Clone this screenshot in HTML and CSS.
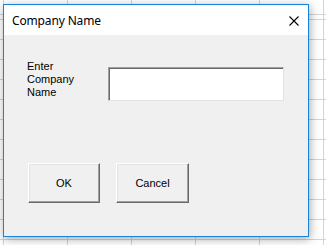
FILE: index.html
```html
<!DOCTYPE html>
<html>
<head>
<meta charset="utf-8">
<link rel="stylesheet" href="styles.css">
</head>
<body>
<div class="window">
  <div class="titlebar">
    <span class="title">Company Name</span>
    <svg class="close" width="10" height="10" viewBox="0 0 10 10"><path d="M0.5 0.5 L9.5 9.5 M9.5 0.5 L0.5 9.5" stroke="#000" stroke-width="1.1" fill="none"/></svg>
  </div>
  <div class="content">
    <div class="row">
      <label class="label">Enter<br>Company<br>Name</label>
      <div class="textbox"></div>
    </div>
    <div class="buttons">
      <button class="btn">OK</button>
      <button class="btn">Cancel</button>
    </div>
  </div>
</div>
</body>
</html>
```
FILE: styles.css
```css
html, body {
  margin: 0;
  padding: 0;
}
body {
  width: 326px;
  height: 245px;
  overflow: hidden;
  background-color: #fff;
  background-image:
    repeating-linear-gradient(to right, #d4d4d4 0, #d4d4d4 1px, transparent 1px, transparent 64px),
    repeating-linear-gradient(to bottom, #d4d4d4 0, #d4d4d4 1px, transparent 1px, transparent 20px);
  background-position: 3px 19px, 0 19px;
  font-family: "Liberation Sans", Arial, sans-serif;
  padding: 4px 0 0 3px;
  box-sizing: border-box;
}
.window {
  width: 306px;
  height: 233px;
  box-sizing: border-box;
  border: 1px solid #1883d7;
  background: #f0f0f0;
  box-shadow: 1px 2px 9px rgba(0, 0, 0, 0.35);
  display: flex;
  flex-direction: column;
}
.titlebar {
  height: 30px;
  background: #fff;
  display: flex;
  align-items: center;
  justify-content: space-between;
  padding: 0 9px 0 8px;
}
.title {
  font-family: "Noto Sans", "Open Sans", sans-serif;
  font-size: 12px;
  color: #000;
  letter-spacing: -0.15px;
}
.close {
  display: block;
  margin-top: 1px;
}
.content {
  flex: 1;
  padding: 25px 0 0 23px;
}
.row {
  display: flex;
  align-items: flex-start;
}
.label {
  width: 81px;
  font-size: 11px;
  line-height: 13px;
  color: #000;
}
.textbox {
  margin-top: 7px;
  width: 176px;
  height: 34px;
  box-sizing: border-box;
  background: #fff;
  border-top: 1px solid #a0a0a0;
  border-left: 1px solid #a0a0a0;
  border-right: 1px solid #e3e3e3;
  border-bottom: 1px solid #e3e3e3;
  box-shadow: inset 1px 1px 0 #696969;
}
.buttons {
  display: flex;
  gap: 16px;
  margin-top: 62px;
  margin-left: 1px;
}
.btn {
  width: 72px;
  height: 40px;
  box-sizing: border-box;
  background: #f0f0f0;
  border-top: 1px solid #fff;
  border-left: 1px solid #fff;
  border-right: 1px solid #696969;
  border-bottom: 1px solid #696969;
  box-shadow: inset -1px -1px 0 #a0a0a0, inset 1px 1px 0 #e3e3e3;
  font-family: "Liberation Sans", Arial, sans-serif;
  font-size: 11px;
  color: #000;
  padding: 0;
  margin: 0;
}
.btn + .btn {
  width: 73px;
}
```
